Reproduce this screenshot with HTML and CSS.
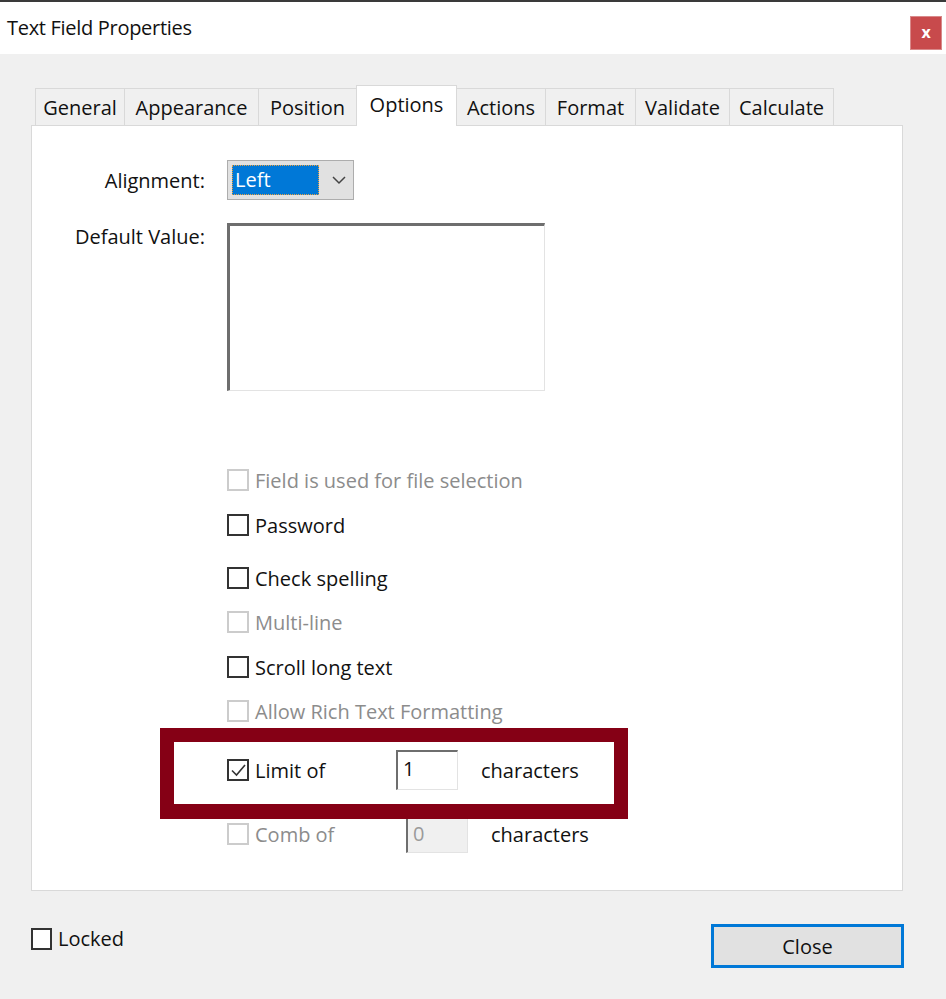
FILE: index.html
```html
<!DOCTYPE html>
<html>
<head>
<meta charset="utf-8">
<link rel="stylesheet" href="styles.css">
</head>
<body>
<div class="topline"></div>
<header class="titlebar">
  <span class="title">Text Field Properties</span>
  <button class="xbtn">x</button>
</header>
<main class="dialog">
  <nav class="tabs">
    <span class="tab t-general">General</span>
    <span class="tab t-appear">Appearance</span>
    <span class="tab t-pos">Position</span>
    <span class="tab t-opt active">Options</span>
    <span class="tab t-act">Actions</span>
    <span class="tab t-fmt">Format</span>
    <span class="tab t-val">Validate</span>
    <span class="tab t-calc">Calculate</span>
  </nav>
  <section class="panel">
    <div class="form-grid">
      <label class="lbl lbl-mid">Alignment:</label>
      <div class="select">
        <span class="sel-value">Left</span>
        <svg class="chev" width="14" height="9" viewBox="0 0 14 9"><polyline points="1,1 7,7 13,1" fill="none" stroke="#444" stroke-width="1.5"/></svg>
      </div>
      <label class="lbl lbl-top">Default Value:</label>
      <div class="textarea"></div>
    </div>
    <div class="checks">
      <div class="row r-file disabled"><span class="box"></span><span>Field is used for file selection</span></div>
      <div class="row r-pass"><span class="box"></span><span>Password</span></div>
      <div class="row r-spell"><span class="box"></span><span>Check spelling</span></div>
      <div class="row r-multi disabled"><span class="box"></span><span>Multi-line</span></div>
      <div class="row r-scroll"><span class="box"></span><span>Scroll long text</span></div>
      <div class="row r-rich disabled"><span class="box"></span><span>Allow Rich Text Formatting</span></div>
      <div class="row r-limit">
        <span class="box"><svg width="17" height="17" viewBox="0 0 17 17"><polyline points="2,8.5 6.5,13 15,3" fill="none" stroke="#333" stroke-width="1.6"/></svg></span>
        <span class="cb-label">Limit of</span>
        <span class="num">1</span>
        <span class="suffix">characters</span>
      </div>
      <div class="row r-comb">
        <span class="box dis-box"></span>
        <span class="cb-label dis-text">Comb of</span>
        <span class="num num-dis">0</span>
        <span class="suffix">characters</span>
      </div>
    </div>
    <div class="annot"></div>
  </section>
  <footer class="footer">
    <div class="locked"><span class="box"></span><span>Locked</span></div>
    <button class="close">Close</button>
  </footer>
</main>
</body>
</html>
```

FILE: styles.css
```css
* { box-sizing: border-box; }
html, body { margin: 0; padding: 0; }
body {
  width: 946px;
  height: 999px;
  background: #f0f0f0;
  font-family: "Open Sans", "Noto Sans", sans-serif;
  font-size: 20px;
  color: #111;
  overflow: hidden;
}
.topline { height: 2px; background: #3a3a3a; }
.titlebar {
  height: 52px;
  background: #fff;
  display: flex;
  align-items: center;
  justify-content: space-between;
  padding: 0 4px 0 7px;
}
.title { font-size: 20px; letter-spacing: -0.3px; color: #111; margin-top: -1px; }
.xbtn {
  width: 32px; height: 34px;
  background: #c84a4c;
  border: 1px solid #d9898a;
  color: #fff;
  font-family: "Open Sans", sans-serif;
  font-weight: 700;
  font-size: 16px;
  padding: 0 0 3px 0;
  margin-top: 10px;
}
.dialog { padding: 31px 43px 0 31px; }
.tabs {
  display: flex;
  align-items: flex-end;
  padding-left: 4px;
  height: 41px;
  position: relative;
  z-index: 2;
  margin-bottom: -1px;
}
.tab {
  height: 37px;
  margin-bottom: 1px;
  display: flex;
  align-items: center;
  justify-content: center;
  border: 1px solid #d9d9d9;
  border-bottom: none;
  border-left: none;
  background: #f0f0f0;
  color: #111;
  white-space: nowrap;
}
.t-general { width: 90px; border-left: 1px solid #d9d9d9; }
.t-appear { width: 134px; }
.t-pos { width: 98px; }
.t-opt { width: 101px; }
.t-act { width: 89px; }
.t-fmt { width: 90px; }
.t-val { width: 94px; }
.t-calc { width: 104px; }
.tab.active {
  height: 41px;
  margin-bottom: 0;
  background: #fff;
  border-left: 1px solid #d9d9d9;
  padding-bottom: 4px;
  margin-left: -1px;
}
.panel {
  position: relative;
  height: 766px;
  background: #fff;
  border: 1px solid #d9d9d9;
  padding-top: 34px;
}
.form-grid {
  display: grid;
  grid-template-columns: 173px auto;
  column-gap: 22px;
  row-gap: 23px;
  align-items: start;
}
.lbl { text-align: right; }
.lbl-mid { align-self: center; }
.select {
  width: 127px; height: 40px;
  background: #e1e1e1;
  border: 1px solid #adadad;
  display: flex;
  align-items: center;
  padding: 4px;
  gap: 13px;
}
.sel-value {
  width: 87px; height: 30px;
  background: #0078d7;
  color: #fff;
  outline: 1px dotted #e8a040;
  outline-offset: -1px;
  padding-left: 3px;
  line-height: 29px;
}
.textarea {
  width: 318px; height: 168px;
  background: #fff;
  border-top: 3px solid #6e6e6e;
  border-left: 3px solid #6e6e6e;
  border-right: 1px solid #e3e3e3;
  border-bottom: 1px solid #e3e3e3;
}
.checks {
  display: flex;
  flex-direction: column;
  padding-left: 195px;
}
.row {
  display: flex;
  align-items: center;
  height: 30px;
}
.box {
  width: 22px; height: 22px;
  border: 2px solid #333;
  background: #fff;
  margin-right: 6px;
  flex: none;
  display: flex;
  align-items: center;
  justify-content: center;
}
.disabled { color: #8c8c8c; }
.disabled .box, .dis-box { border-color: #cccccc; }
.dis-text { color: #8c8c8c; }
.r-file { margin-top: 74px; }
.r-pass { margin-top: 15px; }
.r-spell { margin-top: 23px; }
.r-multi { margin-top: 14px; }
.r-scroll { margin-top: 15px; }
.r-rich { margin-top: 14px; }
.r-limit { margin-top: 24px; height: 40px; }
.r-comb { margin-top: 24px; height: 40px; }
.cb-label { width: 141px; }
.num {
  width: 62px; height: 40px;
  border-top: 2px solid #6e6e6e;
  border-left: 2px solid #6e6e6e;
  border-right: 1px solid #e3e3e3;
  border-bottom: 1px solid #e3e3e3;
  background: #fff;
  padding-left: 5px;
  line-height: 34px;
  margin-right: 23px;
}
.num-dis {
  background: #f0f0f0;
  color: #9a9a9a;
  margin-left: 10px;
  height: 38px;
}
.annot {
  position: absolute;
  left: 128px;
  top: 602px;
  width: 468px;
  height: 91px;
  border: 14px solid #850015;
  border-bottom-width: 15px;
}
.footer {
  display: flex;
  justify-content: space-between;
  align-items: flex-start;
  margin-top: 33px;
}
.locked {
  display: flex;
  align-items: center;
  margin-top: 1px;
}
.locked .box { width: 21px; height: 22px; }
.close {
  width: 193px; height: 44px;
  margin-right: -1px;
  background: #e1e1e1;
  border: 2px solid #0078d7;
  box-shadow: inset 0 0 0 1px #0078d7;
  font-family: "Open Sans", sans-serif;
  font-size: 20px;
  color: #111;
  padding: 0;
}
```
